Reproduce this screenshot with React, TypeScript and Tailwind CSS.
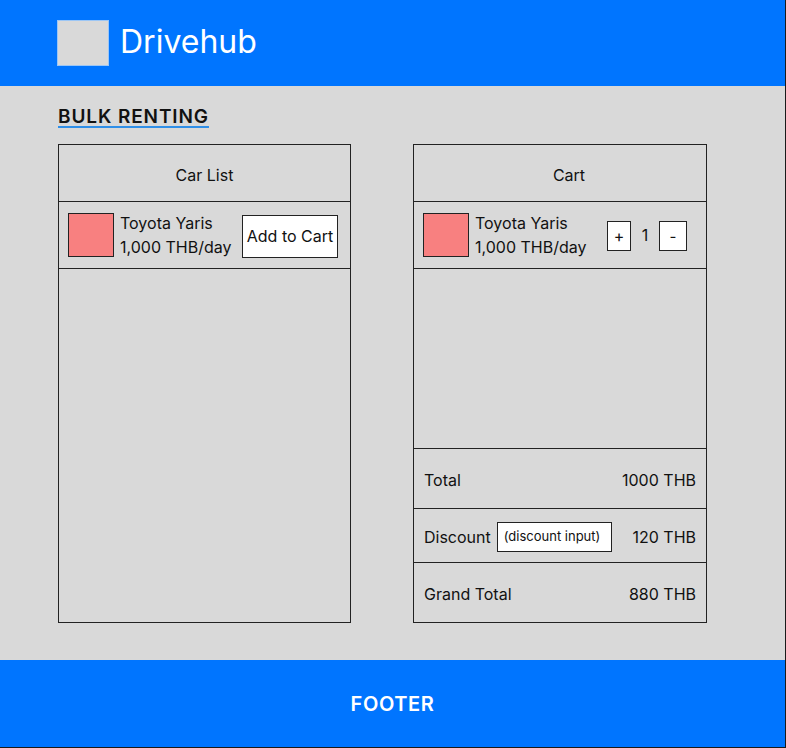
import React from 'react';

function CarThumb() {
  return <div className="w-[46px] h-[44px] bg-[#F88080] border border-[#222]" />;
}

function CarInfo() {
  return (
    <div className="flex flex-col text-[16px] leading-[24px] text-[#111]">
      <span>Toyota Yaris</span>
      <span>1,000 THB/day</span>
    </div>
  );
}

export default function App() {
  return (
    <div
      className="w-[786px] h-[748px] flex flex-col bg-[#D9D9D9] border-r border-b border-[#1a1a1a]"
      style={{ fontFamily: 'Inter, "Noto Sans", sans-serif' }}
    >
      {/* Header */}
      <header className="h-[86px] bg-[#0075FF] flex items-center pl-[57px] gap-[11px] shrink-0">
        <div className="w-[52px] h-[46px] bg-[#D9D9D9] border border-[#9cc6f5]" />
        <span className="text-white text-[32px] leading-none pb-[2px]">Drivehub</span>
      </header>

      {/* Main */}
      <main className="flex-1 pl-[58px] pt-[19px]">
        <h1 className="text-[19px] font-semibold leading-[24px] text-[#111] tracking-[0.9px] underline decoration-[#2F8FE8] decoration-2 underline-offset-[3px] w-fit">
          BULK RENTING
        </h1>

        <div className="flex gap-[62px] mt-[15px]">
          {/* Car list */}
          <section className="w-[293px] h-[479px] border border-[#222] flex flex-col">
            <div className="h-[57px] border-b border-[#222] flex items-center justify-center pt-[3px] text-[16px] text-[#111]">
              Car List
            </div>
            <div className="h-[67px] border-b border-[#222] flex items-center pl-[9px] pr-[12px]">
              <CarThumb />
              <div className="ml-[6px] flex-1">
                <CarInfo />
              </div>
              <button className="w-[96px] h-[43px] mt-[2px] bg-white border border-[#222] text-[16px] text-[#111]">
                Add to Cart
              </button>
            </div>
            <div className="flex-1" />
          </section>

          {/* Cart */}
          <section className="w-[294px] h-[479px] border border-[#222] flex flex-col">
            <div className="h-[57px] border-b border-[#222] flex items-center justify-center pl-[18px] pt-[3px] text-[16px] text-[#111]">
              Cart
            </div>
            <div className="h-[67px] border-b border-[#222] flex items-center pl-[9px]">
              <CarThumb />
              <div className="ml-[6px] w-[132px]">
                <CarInfo />
              </div>
              <button className="w-[24px] h-[30px] mt-[2px] bg-white border border-[#222] text-[16px] text-[#111] leading-none">
                +
              </button>
              <span className="w-[28px] text-center text-[16px] text-[#111]">1</span>
              <button className="w-[28px] h-[30px] mt-[2px] bg-white border border-[#222] text-[15px] text-[#111] leading-none">
                -
              </button>
            </div>
            <div className="flex-1 border-b border-[#222]" />
            <div className="h-[60px] border-b border-[#222] flex items-center justify-between pl-[10px] pr-[10px] pt-[3px] text-[16px] text-[#111]">
              <span>Total</span>
              <span>1000 THB</span>
            </div>
            <div className="h-[54px] border-b border-[#222] flex items-center pl-[10px] pr-[10px] pt-[2px] text-[16px] text-[#111]">
              <span>Discount</span>
              <div className="ml-[6px] w-[115px] h-[30px] bg-white border border-[#222] flex items-center pl-[6px] text-[13px]">
                (discount input)
              </div>
              <span className="ml-auto">120 THB</span>
            </div>
            <div className="h-[59px] flex items-center justify-between pl-[10px] pr-[10px] pt-[2px] text-[16px] text-[#111]">
              <span>Grand Total</span>
              <span>880 THB</span>
            </div>
          </section>
        </div>
      </main>

      {/* Footer */}
      <footer className="h-[87px] bg-[#0075FF] flex items-center justify-center text-white text-[20px] font-semibold tracking-[0.6px] shrink-0">
        FOOTER
      </footer>
    </div>
  );
}
